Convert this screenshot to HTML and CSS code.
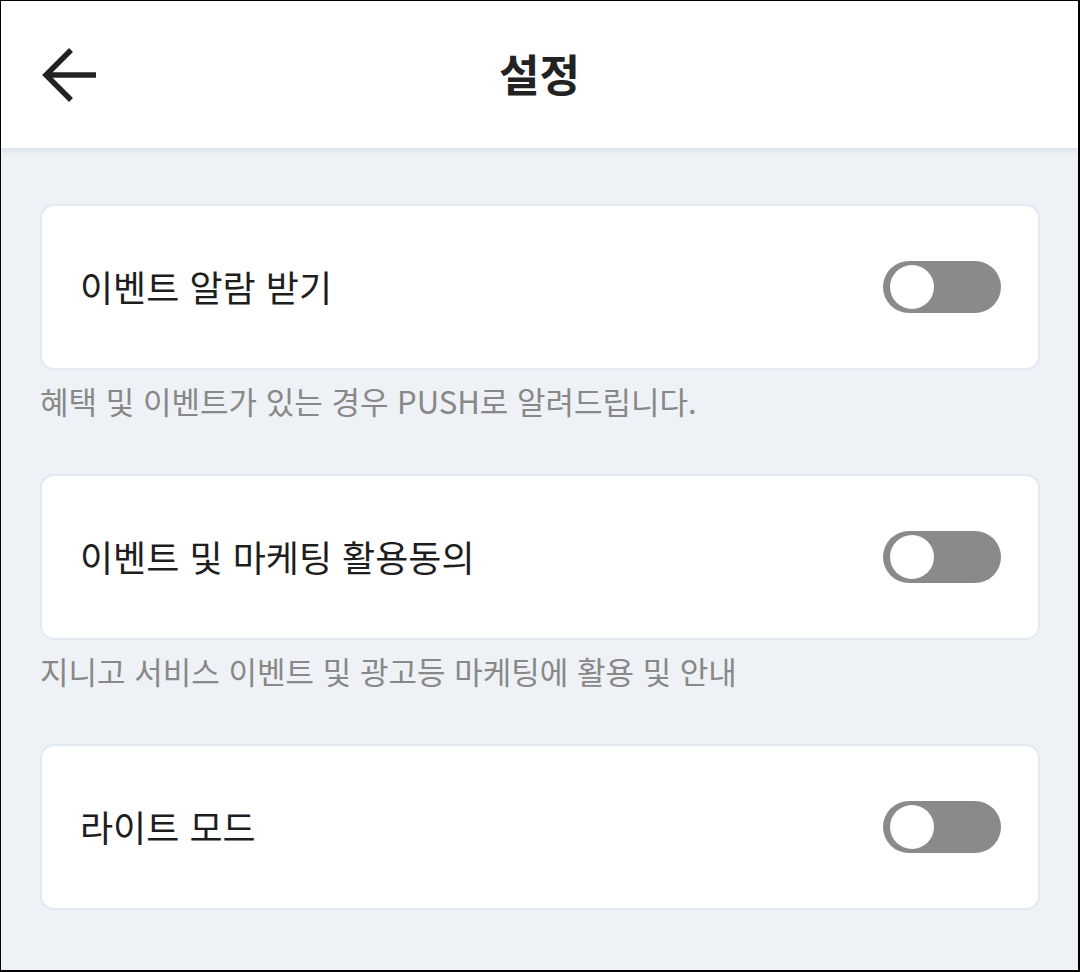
FILE: index.html
```html
<!DOCTYPE html>
<html lang="ko">
<head>
<meta charset="utf-8">
<title>설정</title>
<link rel="stylesheet" href="styles.css">
</head>
<body>
<div class="screen">
  <header class="topbar">
    <button class="back" aria-label="뒤로">
      <svg width="60" height="60" viewBox="0 0 60 60" fill="none" stroke="#222" stroke-width="5.5" stroke-linecap="butt" stroke-linejoin="miter">
        <path d="M57 30 H8"/>
        <path d="M32 5 L7 30 L32 55"/>
      </svg>
    </button>
    <h1 class="title">설정</h1>
  </header>
  <main class="content">
    <section class="setting">
      <div class="card">
        <span class="label">이벤트 알람 받기</span>
        <span class="toggle"><span class="knob"></span></span>
      </div>
      <p class="desc">혜택 및 이벤트가 있는 경우 PUSH로 알려드립니다.</p>
    </section>
    <section class="setting">
      <div class="card">
        <span class="label">이벤트 및 마케팅 활용동의</span>
        <span class="toggle"><span class="knob"></span></span>
      </div>
      <p class="desc">지니고 서비스 이벤트 및 광고등 마케팅에 활용 및 안내</p>
    </section>
    <section class="setting">
      <div class="card">
        <span class="label">라이트 모드</span>
        <span class="toggle"><span class="knob"></span></span>
      </div>
    </section>
  </main>
</div>
</body>
</html>
```

FILE: styles.css
```css
* { box-sizing: border-box; }
html, body { margin: 0; padding: 0; }
body {
  font-family: "Noto Sans CJK KR", "Noto Sans", sans-serif;
  background: #000;
}
.screen {
  width: 1080px;
  height: 972px;
  border-style: solid;
  border-color: #000;
  border-width: 1px 2px 2px 1px;
  background: #eef2f6;
  overflow: hidden;
}
.topbar {
  height: 149px;
  background: #fff;
  border-bottom: 2px solid #dfe6ee;
  box-shadow: 0 2px 5px rgba(120, 140, 160, 0.12);
  display: flex;
  align-items: center;
  justify-content: center;
  position: relative;
}
.back {
  position: absolute;
  left: 38px;
  top: 44px;
  width: 60px;
  height: 60px;
  padding: 0;
  border: 0;
  background: none;
  display: flex;
}
.title {
  margin: 0;
  font-size: 44px;
  font-weight: 700;
  color: #222;
  line-height: 1;
  padding-bottom: 4px;
}
.content {
  padding: 54px 38px 0 39px;
  display: flex;
  flex-direction: column;
}
.setting {
  display: flex;
  flex-direction: column;
}
.card {
  height: 166px;
  background: #fff;
  border: 2px solid #e2e9f1;
  border-radius: 14px;
  display: flex;
  align-items: center;
  justify-content: space-between;
  padding: 0 37px 0 38px;
}
.label {
  font-size: 36px;
  font-weight: 400;
  color: #1e1e1e;
  padding-bottom: 2px;
}
.toggle {
  width: 118px;
  height: 52px;
  border-radius: 26px;
  background: #8a8a8a;
  display: flex;
  align-items: center;
  padding-left: 7px;
}
.knob {
  width: 44px;
  height: 44px;
  border-radius: 50%;
  background: #fff;
}
.desc {
  margin: 10px 0 52px 0;
  font-size: 31px;
  line-height: 42px;
  color: #888;
  font-weight: 400;
}
```
